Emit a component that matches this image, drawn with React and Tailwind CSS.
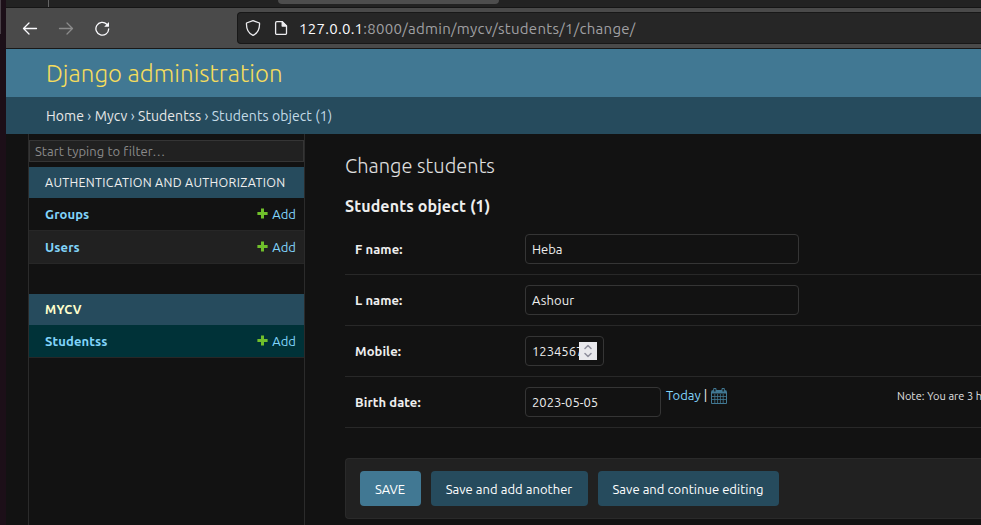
import React from "react";

function BackIcon() {
  return (
    <svg className="h-4 w-4" viewBox="0 0 16 16" fill="none" stroke="#fbfbfe" strokeWidth="1.3" strokeLinecap="round" strokeLinejoin="round">
      <path d="M14.5 8.5H1.5M7 3L1.5 8.5L7 14" />
    </svg>
  );
}

function ForwardIcon() {
  return (
    <svg className="h-4 w-4" viewBox="0 0 16 16" fill="none" stroke="#8b8b8b" strokeWidth="1.3" strokeLinecap="round" strokeLinejoin="round">
      <path d="M1.5 8.5H14.5M9 3L14.5 8.5L9 14" />
    </svg>
  );
}

function ReloadIcon() {
  return (
    <svg className="h-4 w-4" viewBox="0 0 16 16" fill="none">
      <path d="M12.8 4.2A6.4 6.4 0 1 0 14.7 9" stroke="#fbfbfe" strokeWidth="1.3" strokeLinecap="round" />
      <path d="M15 2V6.3A.5.5 0 0 1 14.5 6.8H10.2Z" fill="#fbfbfe" />
    </svg>
  );
}

function ShieldIcon() {
  return (
    <svg className="h-4 w-4" viewBox="0 0 16 16" fill="none" stroke="#ececef" strokeWidth="1.3" strokeLinejoin="round">
      <path d="M8 .7L14.5 3C14.8 8.500 13 13 8 15.400C3 13 1.200 8.500 1.500 3Z" />
    </svg>
  );
}

function PageIcon() {
  return (
    <svg className="h-4 w-4" viewBox="0 0 16 16" fill="none" stroke="#ececef" strokeWidth="1.3" strokeLinejoin="round">
      <path d="M3.800 1.700H9.200L13.500 6V13.200A1.200 1.200 0 0 1 12.300 14.400H3.800A1.200 1.200 0 0 1 2.600 13.200V2.900A1.200 1.200 0 0 1 3.800 1.700Z" />
      <path d="M9.200 1.700V6H13.500Z" fill="#ececef" />
    </svg>
  );
}

function PlusIcon() {
  return (
    <svg className="mb-px h-[11px] w-[11px]" viewBox="0 0 11 11" fill="#70bf2b">
      <path d="M4 .4H7V4H10.600V7H7V10.600H4V7H.4V4H4Z" />
    </svg>
  );
}

function CalendarIcon() {
  return (
    <svg className="h-4 w-4" viewBox="0 0 16 16" fill="none">
      <path d="M0.500 3.500Q.5 2.500 1.500 2.500H14.500Q15.500 2.500 15.500 3.500V15.500H.5Z" stroke="#417893" />
      <path d="M1 3H15V5.500H1Z" fill="#417893" />
      <path d="M3.800 6V15M6.600 6V15M9.400 6V15M12.200 6V15M1 8.500H15M1 11.500H15" stroke="#417893" strokeWidth=".8" />
      <path d="M2.700 .5H5V4H2.700ZM11 .5H13.300V4H11Z" fill="#121212" stroke="#417893" />
    </svg>
  );
}

function Model({ name, tone }) {
  return (
    <div className={`flex h-[33px] items-center justify-between border-b border-[#272727] pl-4 pr-2 text-[13px] leading-4 text-[#81d4fa] ${tone}`}>
      <span className="font-bold tracking-[0.13px]">{name}</span>
      <span className="flex items-center gap-[4px]">
        <PlusIcon />
        <span className="tracking-[0.06px]">Add</span>
      </span>
    </div>
  );
}

function FormRow({ label, children }) {
  return (
    <div className="flex h-[51px] items-center border-b border-[#282828] pl-[10px]">
      <label className="w-[170px] shrink-0 pt-[2px] text-[13px] font-bold tracking-[0.08px] text-[#eeeeee]">{label}</label>
      {children}
    </div>
  );
}

function Field({ width, children }) {
  return (
    <div className={`flex h-[30px] shrink-0 items-center rounded-[4px] border border-[#353535] px-[6px] text-[13px] text-[#eeeeee] ${width}`}>
      {children}
    </div>
  );
}

export default function App() {
  return (
    <div className="flex h-[525px] w-[981px] overflow-hidden bg-[#121212] font-['Ubuntu','Noto_Sans',sans-serif]">
      <div className="w-[6px] shrink-0 bg-[#1c0f18]">
        <div className="h-[34px] w-px bg-[#4a4148]" />
      </div>
      <div className="flex min-w-0 flex-1 flex-col">
        <div className="flex h-2 shrink-0 border-b border-[#151515] bg-[#222222]">
          <div className="w-[43px] border-r border-[#646464]" />
          <div className="ml-[229px] h-1 w-[221px] rounded-b-[4px] bg-[#4d4d4d]" />
        </div>
        <div className="flex h-[41px] shrink-0 items-center border-b border-[#181818] bg-[#4a4a4a] pl-4">
          <div className="flex w-[215px] items-center gap-5">
            <BackIcon />
            <ForwardIcon />
            <ReloadIcon />
          </div>
          <div className="flex h-8 flex-1 items-center rounded-l-[4px] border border-r-0 border-[#181818] bg-[#262626] pl-[7px]">
            <ShieldIcon />
            <div className="ml-3">
              <PageIcon />
            </div>
            <span className="ml-[10px] whitespace-nowrap pt-[2px] text-[15px] tracking-[0.28px] text-[#a0a0a3]">
              <span className="text-[#fbfbfe]">127.0.0.1</span>:8000/admin/mycv/students/1/change/
            </span>
          </div>
        </div>
        <header className="flex h-12 shrink-0 items-center bg-[#417893] pl-10 pt-px">
          <h1 className="whitespace-nowrap text-[24px] font-light tracking-[0.04px] text-[#f5dd5d]">Django administration</h1>
        </header>
        <nav className="flex h-[37px] shrink-0 items-center whitespace-pre bg-[#264b5d] pl-10 pt-[2px] text-[14px] tracking-[0.08px] text-[#c4dce8]">
          <span className="text-[#e8e8e8]">Home</span> › <span className="text-[#e8e8e8]">Mycv</span> › <span className="text-[#e8e8e8]">Studentss</span> › Students object (1)
        </nav>
        <div className="flex min-h-0 flex-1">
          <aside className="ml-[22px] w-[277px] shrink-0 border-x border-[#2b2b2b] pt-[6px]">
            <div className="flex h-[22px] items-center border border-[#353535] bg-[#212121] pl-[5px] pt-[2px] text-[13px] tracking-[0.06px] text-[#8a8a8a]">
              Start typing to filter…
            </div>
            <div className="mt-[5px] flex h-[31px] items-center whitespace-nowrap bg-[#264b5d] pl-4 text-[12.5px] tracking-[0.31px] text-[#eeeeee]">
              AUTHENTICATION AND AUTHORIZATION
            </div>
            <Model name="Groups" tone="bg-[#121212]" />
            <Model name="Users" tone="bg-[#212121]" />
            <div className="mt-[30px] flex h-[31px] items-center bg-[#264b5d] pl-4 text-[12.5px] font-bold tracking-[0.31px] text-[#ffffcc]">
              MYCV
            </div>
            <Model name="Studentss" tone="bg-[#003238]" />
          </aside>
          <main className="ml-10 min-w-0 flex-1">
            <h1 className="mt-5 whitespace-nowrap text-[20px] font-light leading-6 tracking-[0.03px] text-[#e0e0e0]">Change students</h1>
            <h2 className="mt-[18px] whitespace-nowrap text-[16px] font-bold leading-5 tracking-[0.11px] text-[#eeeeee]">Students object (1)</h2>
            <div className="mt-[8px]">
              <FormRow label="F name:">
                <Field width="w-[274px]"><span className="pt-[2px]">Heba</span></Field>
              </FormRow>
              <FormRow label="L name:">
                <Field width="w-[274px]"><span className="pt-[2px] tracking-[0.1px]">Ashour</span></Field>
              </FormRow>
              <FormRow label="Mobile:">
                <Field width="w-[79px]">
                  <span className="w-[47px] pt-[2px]">1234567</span>
                  <span className="relative flex h-[18px] w-[18px] shrink-0 items-center justify-center bg-[#e9e9ed]">
                    <svg className="h-[14px] w-[8px]" viewBox="0 0 8 14" fill="none" stroke="#8f8f9d" strokeWidth="1.5" strokeLinecap="round" strokeLinejoin="round">
                      <path d="M1 4.500L4 1.500L7 4.500M1 9.500L4 12.500L7 9.500" />
                    </svg>
                  </span>
                </Field>
              </FormRow>
              <FormRow label="Birth date:">
                <Field width="w-[136px]"><span className="pt-[2px]">2023-05-05</span></Field>
                <div className="mb-3 ml-[5px] flex w-[231px] shrink-0 items-center text-[13px]">
                  <span className="text-[#81d4fa]">Today</span>
                  <span className="ml-[3px] mr-1 text-[#eeeeee]">|</span>
                  <CalendarIcon />
                </div>
                <div className="mb-3 shrink-0 whitespace-nowrap text-[11px] tracking-[0.04px] text-[#e0e0e0]">Note: You are 3 h</div>
              </FormRow>
            </div>
            <div className="mt-[30px] flex h-[61px] items-center gap-[10px] rounded-l-[4px] border border-r-0 border-[#2a2a2a] bg-[#212121] pl-[14px] text-[13px] text-white">
              <button className="h-[35px] w-[61px] rounded-[4px] bg-[#417893] pr-px pt-[2px]">SAVE</button>
              <button className="h-[35px] w-[157px] whitespace-nowrap rounded-[4px] bg-[#264b5d] pt-[2px] pr-px tracking-[0.04px]">Save and add another</button>
              <button className="h-[35px] w-[181px] whitespace-nowrap rounded-[4px] bg-[#264b5d] pt-[2px] pr-px tracking-[0.04px]">Save and continue editing</button>
            </div>
          </main>
        </div>
      </div>
    </div>
  );
}
